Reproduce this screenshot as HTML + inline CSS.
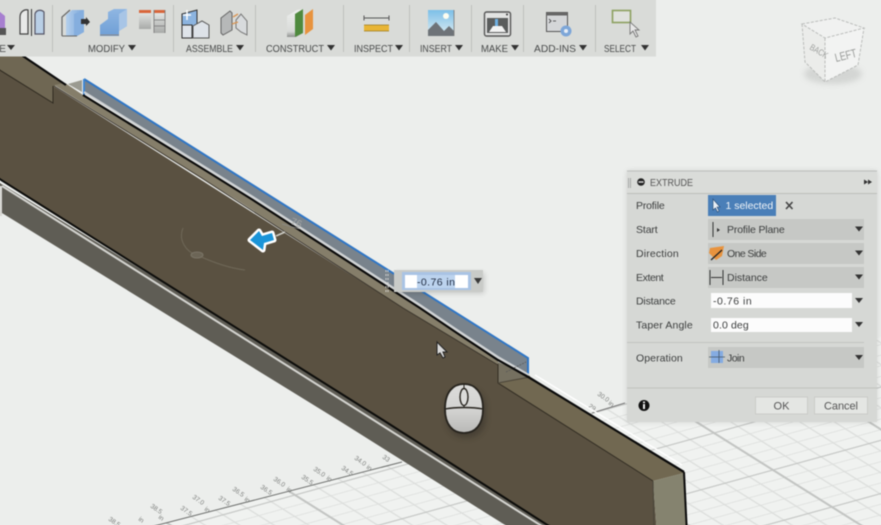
<!DOCTYPE html>
<html><head><meta charset="utf-8"><style>
html,body{margin:0;padding:0;background:#eceeec;width:881px;height:525px;overflow:hidden;position:relative}
svg.main{display:block;position:absolute;left:-10px;top:-10px;filter:blur(.45px)}
text{font-family:"Liberation Sans",sans-serif}
.tb{font-size:10.5px;fill:#484a4a}
.lb{font-size:10.5px;fill:#3c3e3e;letter-spacing:.3px}
.tick{font-size:6.5px;fill:#7f817f}
</style></head><body>
<svg class="main" width="901" height="545" viewBox="-10 -10 901 545" xmlns="http://www.w3.org/2000/svg">
<defs>
<pattern id="g" width="100" height="100" patternUnits="userSpaceOnUse" patternTransform="matrix(1.2 -.33 .59 .37 773 470)">
<g stroke="#dcdedc" stroke-width="1.4" fill="none">
<path d="M20 0V100M40 0V100M60 0V100M80 0V100M0 20H100M0 40H100M0 60H100M0 80H100"/></g>
<path d="M0 0V100M0 0H100M100 0V100M0 100H100" stroke="#c2c4c2" stroke-width="2.2" fill="none"/>
</pattern>
<linearGradient id="b1" x1="0" x2="1"><stop offset="0" stop-color="#b4cfec"/><stop offset="1" stop-color="#7aa6da"/></linearGradient>
<linearGradient id="b2" x1="0" y1="0" x2="0" y2="1"><stop offset="0" stop-color="#8fb6e2"/><stop offset="1" stop-color="#6f9fd6"/></linearGradient>
<linearGradient id="gr" x1="0" y1="0" x2="0" y2="1"><stop offset="0" stop-color="#eceeec"/><stop offset="1" stop-color="#a8aaa8"/></linearGradient>
<linearGradient id="wb" x1="0" y1="0" x2="0" y2="1"><stop offset="0" stop-color="#eef0ee"/><stop offset=".8" stop-color="#d8dad8"/><stop offset="1" stop-color="#8f918f"/></linearGradient>
<linearGradient id="sk" x1="0" y1="0" x2="0" y2="1"><stop offset="0" stop-color="#7cbfe8"/><stop offset="1" stop-color="#e0eef2"/></linearGradient>
<linearGradient id="ms" x1="0" y1="0" x2="0" y2="1"><stop offset="0" stop-color="#dcdcda"/><stop offset=".55" stop-color="#d2d2d0"/><stop offset="1" stop-color="#b8b8b6"/></linearGradient>
<filter id="s" x="-30%" y="-30%" width="160%" height="160%"><feGaussianBlur stdDeviation="3"/></filter>
</defs>
<rect x="-10" y="-10" width="901" height="545" fill="#eceeec"/>
<polygon points="120,535 891,334.500 891,535" fill="#f0f2f0"/>
<polygon points="120,535 891,334.500 891,535" fill="url(#g)"/>
<path d="M120 535L158 525L402 462" stroke="#6c6e6c" stroke-width="1" fill="none"/>
<path d="M592 413L625 403" stroke="#777" stroke-width="1" fill="none"/>
<!-- tick labels -->
<g class="tick">
<text transform="translate(108,520) rotate(35)">38.5</text>
<text transform="translate(138,520) rotate(35)">in</text>
<text transform="translate(150,507) rotate(35)">38.5</text><text transform="translate(158,518) rotate(35)">in</text>
<text transform="translate(180,509) rotate(35)">37.5</text>
<text transform="translate(192,498) rotate(35)">37.0</text><text transform="translate(204,510) rotate(35)">in</text>
<text transform="translate(218,499) rotate(35)">37.5</text>
<text transform="translate(232,490) rotate(35)">36.5</text><text transform="translate(244,500) rotate(35)">in</text>
<text transform="translate(260,488) rotate(35)">36.5</text>
<text transform="translate(273,480) rotate(35)">36.0</text><text transform="translate(286,490) rotate(35)">in</text>
<text transform="translate(301,478) rotate(35)">35.5</text>
<text transform="translate(313,470) rotate(35)">35.0</text><text transform="translate(326,479) rotate(35)">in</text>
<text transform="translate(341,469) rotate(35)">34.5</text>
<text transform="translate(354,459) rotate(35)">34.0</text><text transform="translate(366,468) rotate(35)">in</text>
<text transform="translate(382,458) rotate(35)">33</text>
<text transform="translate(597,395) rotate(35)">30.0</text><text transform="translate(608,404) rotate(35)">in</text>
<text transform="translate(588,407) rotate(35)">29</text>
</g>
<!-- beam lower band -->
<polygon points="-10,177 576,535 521,535 338,420 2,213 -10,213" fill="#5f5d55"/>
<polygon points="-10,186 2,186 2,216 -10,216" fill="#d8d8d4"/>
<path d="M2 186L556 535" stroke="#d4d4d0" stroke-width="2" fill="none"/>
<!-- front -->
<polygon points="-10,64 53,103 53,86 403,308 498,365 498,383 653,481 657,535 561,535 383,420 -10,173" fill="#5a5141"/>
<path d="M-10 173L383 420L563 535" stroke="#0c0c0a" stroke-width="2" fill="none"/>
<!-- top tan left -->
<polygon points="-10,50 14,50 24,57 64,84 54,86 53,103 -10,64" fill="#6f6753"/>
<path d="M-10 64L53 103V86" stroke="#2f2a20" stroke-width="1" fill="none"/>
<!-- thin tan -->
<polygon points="54,85 65,83 83,95 200,167 253,200 420,308 498,361 498,365 403,308 237,200 200,177" fill="#857e6a"/>
<path d="M54 86L200 177L403 308L498 365" stroke="#39332a" stroke-width="1" fill="none"/>
<!-- notch right -->
<polygon points="498,362 530,376 530,378 498,383" fill="#757060"/>
<polygon points="498,383 530,377 684,473 653,481" fill="#716851"/>
<path d="M498 364V383L653 481" stroke="#322d23" stroke-width="1" fill="none"/>
<path d="M498 383L530 377" stroke="#4b4538" stroke-width="1" fill="none"/>
<!-- end face -->
<polygon points="653,481 684,473 687,535 657,535" fill="#85836f"/>
<path d="M653 481L654 535" stroke="#4a463a" stroke-width="1"/>
<!-- band -->
<polygon points="84,79 528,358 529,375 498,357 457,330 420,305 253,197 200,164 84,92" fill="#79838c"/>
<polygon points="68,84 82,80 82,92" fill="#9a9a90"/>
<path d="M84 79L528 358V375" stroke="#2f76c6" stroke-width="2" fill="none"/>
<path d="M84 79V96" stroke="#3f86d2" stroke-width="2" fill="none"/>
<path d="M84 92L200 164L253 197L420 305L457 330L498 357L529 375" stroke="#cfd2d4" stroke-width="2" fill="none"/>
<path d="M506 372L526 362" stroke="#555" stroke-width=".7" stroke-dasharray="2 1" fill="none"/>
<!-- black edge -->
<path d="M14 50L66 85M83 95L200 167L253 200L420 308L457 333L498 360L530 378L684 472" stroke="#0a0a0a" stroke-width="2.200" fill="none"/>
<path d="M535 375L682 465" stroke="#fff" stroke-width="1.400" fill="none"/>
<path d="M684 472L687 535" stroke="#0a0a0a" stroke-width="2" fill="none"/>
<!-- dimension arc -->
<path d="M183 228C178 240 186 252 197 255C212 262 228 268 245 270" stroke="#6f6858" stroke-width="1" fill="none"/>
<ellipse cx="197" cy="255" rx="6" ry="3" fill="#6c6556" stroke="#7a7466"/>
<path d="M276 236L285 232" stroke="#cfcfc8" stroke-width="1.600"/>
<path d="M282 224L300 229" stroke="#8c8d8a" stroke-width=".8"/>
<text x="290" y="224" font-size="10" fill="#a8a9a6" transform="rotate(20 290 224)">76</text>
<!-- arrow -->
<path d="M250 240L259 231L262 236L272 233L274 240L264 243L263 250Z" fill="#1a94d8" stroke="#fff" stroke-width="5" stroke-linejoin="round" paint-order="stroke"/>
<!-- dashed -->
<path d="M386 270V292M388 270V292" stroke="#e8e8e4" stroke-width=".8" stroke-dasharray="2 2"/>
<!-- float input -->
<rect x="396" y="273" width="88" height="20" fill="#000" opacity=".18" filter="url(#s)"/>
<rect x="394" y="270" width="89" height="22" fill="#c9cbc8"/>
<rect x="402" y="272" width="69" height="18" fill="#a9c3e4"/>
<rect x="405" y="275" width="63" height="13" fill="#fff"/>
<rect x="417" y="275" width="38" height="13" fill="#bcd3ee"/>
<text x="417" y="285.500" font-size="10.500" fill="#1e2a40" textLength="38">-0.76 in</text>
<path d="M474 278H482L478 284Z" fill="#3a3a3a"/>
<!-- cursor -->
<path d="M437 342V355L440 353L443 358L445 357L443 352L447 352Z" fill="#d8d8d8" stroke="#222" stroke-width="1"/>
<!-- mouse -->
<rect x="446" y="388" width="40" height="50" rx="19" fill="#2a2620" opacity=".4" filter="url(#s)"/>
<path d="M445 409C445 392 453 384 464 384C475 384 483 392 483 409C483 425 475 433 464 433C453 433 445 425 445 409Z" fill="url(#ms)" stroke="#27241e" stroke-width="1.800"/>
<path d="M445 409C455 407 473 407 483 409" stroke="#27241e" stroke-width="1.400" fill="none"/>
<path d="M464 384V388M464 405V408" stroke="#27241e" stroke-width="1"/>
<ellipse cx="464" cy="397" rx="4" ry="8.500" fill="#dcdcda" stroke="#27241e" stroke-width="1.400"/>
<!-- cube -->
<ellipse cx="833" cy="74" rx="29" ry="10" fill="#bbbdbb" opacity=".5" filter="url(#s)"/>
<polygon points="802,24 835,18 864,28 825,38" fill="#f0f1f0"/>
<polygon points="802,24 825,38 825,82 805,62" fill="#ebecea"/>
<polygon points="825,38 864,28 858,65 825,82" fill="#f2f3f2"/>
<path d="M802 24L835 18L864 28L825 38ZM802 24L805 62L825 82L858 65L864 28M825 38V82" fill="none" stroke="#b6b8b6" stroke-width=".9" stroke-dasharray="3 1.500"/>
<text x="0" y="0" font-size="9" fill="#a0a2a0" transform="translate(809,49) rotate(30) scale(.8 1)">BACK</text>
<text x="0" y="0" font-size="10" fill="#989a98" transform="translate(836,62) rotate(-14) scale(.9 1.200)">LEFT</text>
<!-- toolbar -->
<rect x="-10" y="-10" width="666" height="66.500" fill="#d9dbd8"/>
<g stroke="#bec0bd" stroke-width="1"><path d="M52.500 5V52M173.500 5V52M255.500 5V52M343.500 5V52M409.500 5V52M471.500 5V52M523.500 5V52M595.500 5V52"/></g>
<!-- labels -->
<text x="-1" y="52" class="tb">E</text><path d="M7 45H15L11 50Z" fill="#333"/>
<text x="88" y="52" class="tb" textLength="37" lengthAdjust="spacingAndGlyphs">MODIFY</text><path d="M128 45H136L132 50.500Z" fill="#333"/>
<text x="186" y="52" class="tb" textLength="47" lengthAdjust="spacingAndGlyphs">ASSEMBLE</text><path d="M236 45H244L240 50.500Z" fill="#333"/>
<text x="266" y="52" class="tb" textLength="58" lengthAdjust="spacingAndGlyphs">CONSTRUCT</text><path d="M327 45H335L331 50.500Z" fill="#333"/>
<text x="354" y="52" class="tb" textLength="39" lengthAdjust="spacingAndGlyphs">INSPECT</text><path d="M395 45H403L399 50.500Z" fill="#333"/>
<text x="420" y="52" class="tb" textLength="32" lengthAdjust="spacingAndGlyphs">INSERT</text><path d="M455 45H463L459 50.500Z" fill="#333"/>
<text x="481" y="52" class="tb" textLength="27" lengthAdjust="spacingAndGlyphs">MAKE</text><path d="M511 45H519L515 50.500Z" fill="#333"/>
<text x="534" y="52" class="tb" textLength="42" lengthAdjust="spacingAndGlyphs">ADD-INS</text><path d="M579 45H587L583 50.500Z" fill="#333"/>
<text x="604" y="52" class="tb" textLength="32" lengthAdjust="spacingAndGlyphs">SELECT</text><path d="M641 45H649L645 50.500Z" fill="#333"/>
<!-- icon: purple -->
<path d="M-10 12H0L5 16V29H-10Z" fill="#a77fd0"/><rect x="-10" y="28" width="16" height="7" fill="#555"/>
<!-- icon: mirror -->
<path d="M20 34V17C20 12 24 9 28 10V34Z" fill="#e8e9e8" stroke="#444" stroke-width="1.200"/>
<path d="M31.500 9V36" stroke="#333" stroke-width="1"/>
<path d="M35 34V14C36 10 41 9 44 12V34Z" fill="#b9cfe6" stroke="#556" stroke-width="1.200"/>
<!-- icon: press pull -->
<polygon points="66,15 72,10 84,10 84,32 77,36 66,36" fill="url(#b1)"/>
<polygon points="74,14 84,10 84,32 77,36 74,36" fill="#85aede"/>
<path d="M62 36V17L70 10" stroke="#666" stroke-width="1.200" fill="none"/>
<path d="M62 36H77" stroke="#666" stroke-width="1"/>
<path d="M81 19H86V17L90 22L86 26V24H81Z" fill="#333"/>
<!-- icon: fillet -->
<path d="M100 25L108 19V12L114 9H127V26L119 31V36H100Z" fill="url(#b2)"/>
<path d="M119 14L127 9V26L119 31Z" fill="#a8c5e6"/>
<path d="M100 35H119" stroke="#888" stroke-width="1"/>
<!-- icon: table -->
<rect x="139" y="10" width="12" height="19" fill="url(#gr)"/><rect x="154" y="10" width="11" height="23" fill="url(#gr)"/>
<rect x="139" y="10" width="12" height="3" fill="#d8653a"/><rect x="154" y="10" width="11" height="3" fill="#d8653a"/>
<path d="M154 20H165M154 26H165M154 10V33M165 10V33" stroke="#777" stroke-width=".8"/>
<!-- icon: assemble -->
<polygon points="182,14 197,10 197,25 192,28 182,28" fill="#8cb4e0" stroke="#333" stroke-width="1"/>
<rect x="182" y="25" width="10" height="13" fill="#dfe4ea" stroke="#333" stroke-width="1"/>
<polygon points="193,26 202,21 209,25 209,38 193,38" fill="#dde2e8" stroke="#555" stroke-width="1"/>
<path d="M183 15H191M187 10V20" stroke="#fff" stroke-width="1.500"/>
<!-- icon: joint -->
<path d="M221 33V18L230 11L232 13V30L223 35Z" fill="#b6b8b8" stroke="#666" stroke-width="1"/>
<path d="M236 20L241 14L247 21V35L241 32L236 28Z" fill="#d8dbdd" stroke="#777" stroke-width="1"/>
<path d="M233 17L238 14M232 24L238 22" stroke="#d99554" stroke-width="1.400"/>
<!-- icon: construct -->
<polygon points="287,16 297,10 303,9 303,33 296,37 287,37" fill="url(#wb)"/>
<polygon points="295,14 303,9 303,33 295,37" fill="#4f8a3e"/>
<polygon points="305,15 313,9 313,29 305,35" fill="#e8933e"/>
<!-- icon: inspect -->
<path d="M364 18H389M364 15.500V20.500M389 15.500V20.500" stroke="#555" stroke-width="1" fill="none"/>
<rect x="364" y="25" width="25" height="6" fill="#e8b535"/>
<path d="M364 31H389M364 25H389" stroke="#9a7c20" stroke-width=".8"/>
<!-- icon: insert -->
<rect x="428" y="10" width="26" height="26" fill="url(#sk)"/>
<circle cx="446" cy="16" r="3" fill="#fdfdf0"/>
<polygon points="428,36 428,30 436,22 444,31 449,26 454,31 454,36" fill="#6e7378"/>
<path d="M454 10V36" stroke="#777" stroke-width=".8"/>
<!-- icon: make -->
<rect x="484.500" y="12" width="26" height="24" rx="2" fill="#e2e3e2" stroke="#555" stroke-width="1.400"/>
<rect x="487" y="18" width="21" height="15" fill="#5a5c5c"/>
<polygon points="489,32 493,26 502,26 506,32" fill="#f2f2f2"/>
<rect x="495" y="19" width="3" height="7" fill="#6fb0e2"/>
<circle cx="507" cy="14.500" r="1" fill="#333"/>
<!-- icon: add-ins -->
<rect x="546.500" y="12.500" width="21" height="19" fill="#d4d6d8" stroke="#555" stroke-width="1"/>
<rect x="546.500" y="12.500" width="21" height="3" fill="#666"/>
<path d="M549 19L551 21L549 23M553 21H556" stroke="#333" stroke-width=".8" fill="none"/>
<circle cx="566" cy="31" r="5.500" fill="#7da6d8"/><circle cx="566" cy="31" r="2" fill="#e8eef6"/>
<!-- icon: select -->
<rect x="612.500" y="10.500" width="18" height="12" fill="#dfe1dd" stroke="#8ca160" stroke-width="1.600"/>
<path d="M630 22V34L633 31L636 37L638 36L635 30L639 30Z" fill="#e8e8e8" stroke="#777" stroke-width=".9"/>
<!-- panel -->
<rect x="627" y="171" width="250" height="251" fill="#000" opacity=".12" filter="url(#s)"/>
<rect x="627" y="171" width="250" height="251" fill="#d6d8d5"/>
<rect x="627" y="171" width="250" height="22" fill="#dadcd9"/>
<path d="M627 193.500H877M627 171H877" stroke="#bcbebb" stroke-width="1"/>
<path d="M628.500 178V188M630.500 178V188" stroke="#9a9c9a" stroke-width=".8"/>
<circle cx="641" cy="182" r="3.800" fill="#222"/><rect x="638.500" y="181.300" width="5" height="1.400" fill="#ddd"/>
<text x="650" y="186" font-size="10.500" fill="#555" textLength="43" lengthAdjust="spacingAndGlyphs">EXTRUDE</text>
<path d="M864 179.500L868 182L864 184.500ZM868 179.500L872 182L868 184.500Z" fill="#333"/>
<g class="lb">
<text x="636" y="209" textLength="29">Profile</text>
<text x="636" y="233" textLength="22">Start</text>
<text x="636" y="257" textLength="43">Direction</text>
<text x="636" y="281" textLength="28">Extent</text>
<text x="636" y="304.500" textLength="40">Distance</text>
<text x="636" y="328.500" textLength="57">Taper Angle</text>
<text x="636" y="361.500" textLength="47">Operation</text>
</g>
<rect x="708" y="195" width="68" height="21" fill="#4a7fb8"/>
<path d="M713 199V210L715.500 208L717.500 212L719 211L717 207L720 207Z" fill="#e8eef5" stroke="#24466e" stroke-width=".6"/>
<text x="725.500" y="209" font-size="10.500" fill="#f0f4f8" textLength="48" style="letter-spacing:.3px">1 selected</text>
<path d="M786 202L792.500 209M792.500 202L786 209" stroke="#444" stroke-width="1.600"/>
<rect x="708" y="219" width="156" height="21" fill="#c6c8c5"/>
<rect x="708" y="243" width="156" height="21" fill="#c6c8c5"/>
<rect x="708" y="267" width="156" height="21" fill="#c6c8c5"/>
<rect x="708" y="347" width="156" height="21" fill="#c6c8c5"/>
<path d="M855 226.500H863L859 231.500ZM855 250.500H863L859 255.500ZM855 274.500H863L859 279.500ZM855 298H863L859 303ZM855 322H863L859 327ZM855 355H863L859 360Z" fill="#333"/>
<path d="M713 222V237" stroke="#333" stroke-width="1"/><path d="M717 228L720 230L717 232Z" fill="#333"/>
<polygon points="710,248 724,246 722,256 716,260 709,253" fill="#e8933e"/>
<path d="M711 260L722 250" stroke="#222" stroke-width="1.300"/>
<path d="M710 270V285M723 270V285M711 277.500H722" stroke="#333" stroke-width="1"/>
<text x="727" y="233" class="lb" textLength="58">Profile Plane</text>
<text x="727" y="257" class="lb" textLength="40">One Side</text>
<text x="727" y="281" class="lb" textLength="41">Distance</text>
<rect x="711" y="293" width="141" height="15" fill="#fcfcfc"/>
<rect x="711" y="318" width="141" height="14" fill="#fcfcfc"/>
<text x="713" y="304.500" class="lb" textLength="39">-0.76 in</text>
<text x="713" y="328.500" class="lb" textLength="36">0.0 deg</text>
<path d="M627 342.500H864" stroke="#c2c4c1" stroke-width="1"/>
<rect x="711" y="351" width="12" height="12" fill="#85ace2"/>
<path d="M709 357H725M719 350V363" stroke="#456" stroke-width=".8"/>
<text x="727" y="361.500" class="lb" textLength="18">Join</text>
<path d="M627 388H877" stroke="#bfc1be" stroke-width="1"/>
<circle cx="644" cy="405.500" r="5.500" fill="#111"/>
<rect x="643" y="404" width="2" height="5" fill="#eee"/><rect x="643" y="401.500" width="2" height="1.600" fill="#eee"/>
<rect x="755.500" y="397" width="52" height="17" fill="#e4e6e3" stroke="#cacbc8"/>
<rect x="814.500" y="397" width="53" height="17" fill="#e4e6e3" stroke="#cacbc8"/>
<text x="781.500" y="409.500" font-size="11" fill="#555" text-anchor="middle">OK</text>
<text x="841" y="409.500" font-size="11" fill="#555" text-anchor="middle" textLength="34">Cancel</text>
</svg>
</body></html>
